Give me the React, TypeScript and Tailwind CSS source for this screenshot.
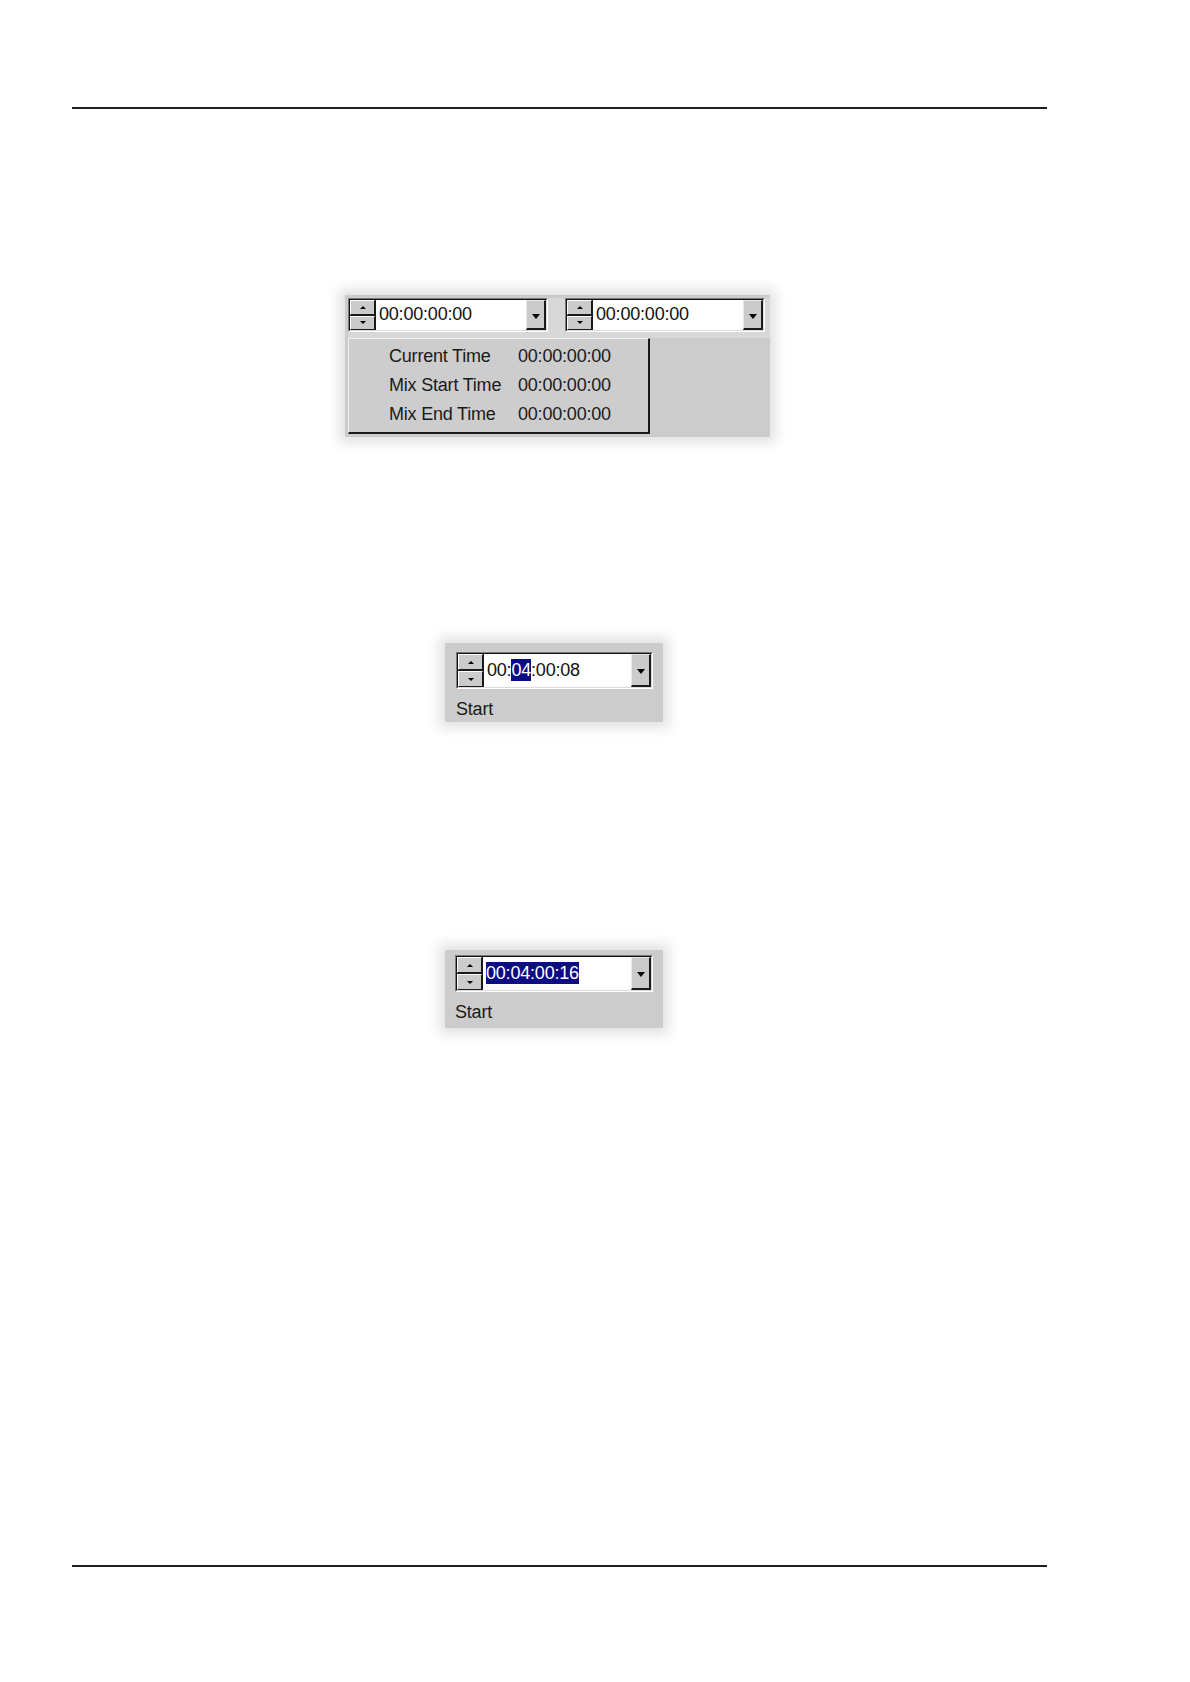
import React from "react";

type Seg = { t: string; hl?: boolean };

function Up() {
  return <div className="w-0 h-0 border-l-[3px] border-r-[3px] border-b-[3px] border-l-transparent border-r-transparent border-b-black" />;
}
function Down() {
  return <div className="w-0 h-0 border-l-[3px] border-r-[3px] border-t-[3px] border-l-transparent border-r-transparent border-t-black" />;
}

function SpinBtn({ up }: { up: boolean }) {
  return (
    <div className="flex-1 border-t border-l border-t-white border-l-white border-b border-r border-b-[#1a1a1a] border-r-[#1a1a1a] bg-[#cbcbcb] flex items-center justify-center">
      {up ? <Up /> : <Down />}
    </div>
  );
}

function Combo({ w, h, segs }: { w: number; h: number; segs: Seg[] }) {
  return (
    <div
      className="flex border-t border-l border-t-[#7a7a7a] border-l-[#7a7a7a] border-b border-r border-b-white border-r-white"
      style={{ width: w, height: h }}
    >
      <div className="flex flex-1 border-t border-l border-t-[#111] border-l-[#111] border-b border-r border-b-[#dcdcdc] border-r-[#dcdcdc] bg-white">
        <div className="w-[26px] flex flex-col bg-[#1a1a1a] gap-px border-r border-[#1a1a1a]">
          <SpinBtn up />
          <SpinBtn up={false} />
        </div>
        <div className="flex-1 flex items-center pl-[3px] pb-[2px] text-[18px] leading-[20px] text-[#111] tracking-[-0.2px] whitespace-nowrap">
          {segs.map((s, i) =>
            s.hl ? (
              <span key={i} className="bg-[#0c0c84] text-white py-[1px]">{s.t}</span>
            ) : (
              <span key={i}>{s.t}</span>
            )
          )}
        </div>
        <div className="w-[20px] bg-[#cbcbcb] border-t border-l border-t-[#e8e8e8] border-l-[#e8e8e8] border-b-2 border-r-2 border-b-[#1a1a1a] border-r-[#1a1a1a] flex items-center justify-center pt-[3px]">
          <div className="w-0 h-0 border-l-[4px] border-r-[4px] border-t-[5px] border-l-transparent border-r-transparent border-t-black" />
        </div>
      </div>
    </div>
  );
}

export default function App() {
  const font = { fontFamily: '"Liberation Sans", Arial, sans-serif' };
  return (
    <div className="w-[1190px] h-[1682px] bg-white pt-[107px]" style={font}>
      <div className="ml-[72px] w-[975px] h-[2px] bg-[#1e1e1e]" />

      {/* Widget 1 */}
      <div className="ml-[345px] mt-[186px] w-[425px] h-[142px] bg-[#cccccc] shadow-[0_0_12px_6px_#e2e2e2] pl-[3px] pt-[3px]">
        <div className="flex gap-[17px] bg-[#d8d8d8] w-[422px] pb-[6px]">
          <Combo w={200} h={34} segs={[{ t: "00:00:00:00" }]} />
          <Combo w={200} h={34} segs={[{ t: "00:00:00:00" }]} />
        </div>
        <div className="w-[302px] h-[96px] bg-[#cdcdcd] border-t border-l border-t-[#f0f0f0] border-l-[#f0f0f0] border-b-2 border-r-2 border-b-[#1a1a1a] border-r-[#1a1a1a] pt-[3px] text-[18px] text-[#1a1a1a] tracking-[-0.2px]">
          <div className="flex flex-col">
            <div className="flex h-[29px] items-center">
              <div className="w-[169px] pl-[40px] whitespace-nowrap">Current Time</div>
              <div className="whitespace-nowrap">00:00:00:00</div>
            </div>
            <div className="flex h-[29px] items-center">
              <div className="w-[169px] pl-[40px] whitespace-nowrap">Mix Start Time</div>
              <div className="whitespace-nowrap">00:00:00:00</div>
            </div>
            <div className="flex h-[29px] items-center">
              <div className="w-[169px] pl-[40px] whitespace-nowrap">Mix End Time</div>
              <div className="whitespace-nowrap">00:00:00:00</div>
            </div>
          </div>
        </div>
      </div>

      {/* Widget 2 */}
      <div className="ml-[445px] mt-[206px] w-[218px] h-[79px] bg-[#cccccc] shadow-[0_0_12px_6px_#e2e2e2] pl-[11px] pt-[9px]">
        <Combo w={197} h={37} segs={[{ t: "00:" }, { t: "04", hl: true }, { t: ":00:08" }]} />
        <div className="mt-[10px] text-[18px] leading-[20px] text-[#1a1a1a] tracking-[-0.2px]">Start</div>
      </div>

      {/* Widget 3 */}
      <div className="ml-[445px] mt-[228px] w-[218px] h-[78px] bg-[#cccccc] shadow-[0_0_12px_6px_#e2e2e2] pl-[10px] pt-[5px]">
        <Combo w={198} h={37} segs={[{ t: "00:04:00:16", hl: true }]} />
        <div className="mt-[10px] text-[18px] leading-[20px] text-[#1a1a1a] tracking-[-0.2px]">Start</div>
      </div>

      <div className="ml-[72px] mt-[537px] w-[975px] h-[2px] bg-[#1e1e1e]" />
    </div>
  );
}
